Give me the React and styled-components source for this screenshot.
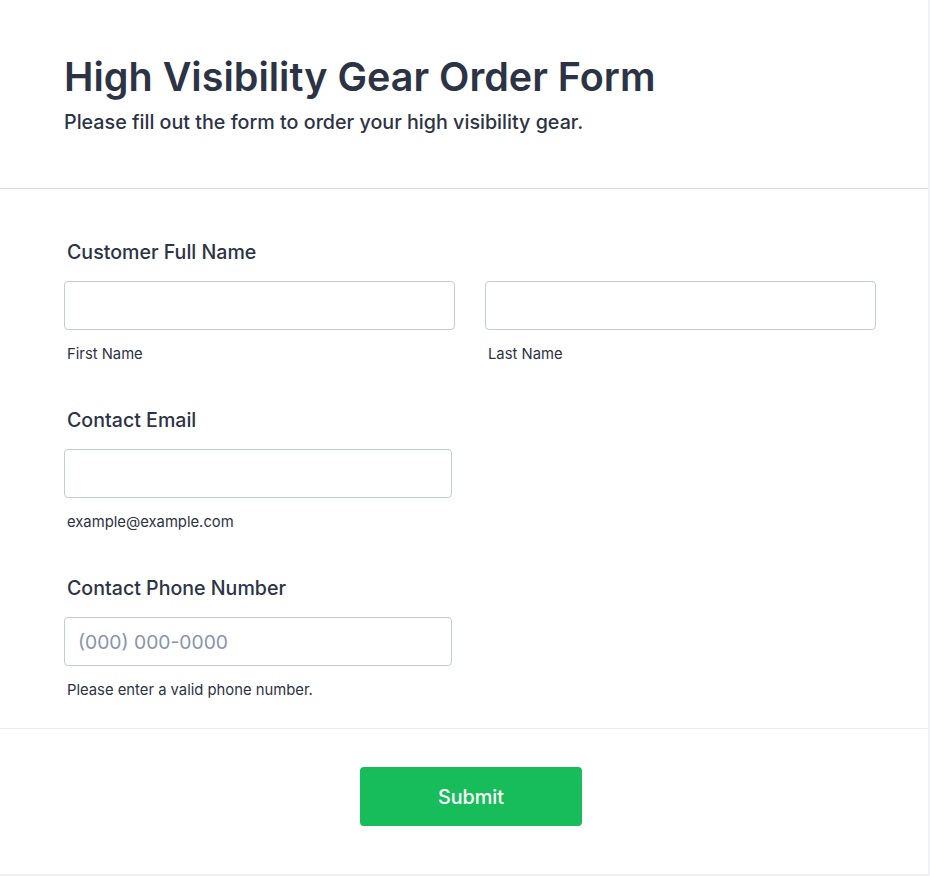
import React from 'react';
import styled, { createGlobalStyle } from 'styled-components';

const GlobalStyle = createGlobalStyle`
  * {
    box-sizing: border-box;
  }
  body {
    margin: 0;
    background: #f3f3fe;
    font-family: Inter, "Noto Sans", sans-serif;
    color: #2c3345;
  }
`;

function App() {
  return (
    <>
      <GlobalStyle />
      <Card>
        <Header>
          <Title>High Visibility Gear Order Form</Title>
          <Subtitle>Please fill out the form to order your high visibility gear.</Subtitle>
        </Header>
        <Body>
          <Field>
            <Label>Customer Full Name</Label>
            <NameRow>
              <Column>
                <Input type="text" />
                <SubLabel>First Name</SubLabel>
              </Column>
              <Column>
                <Input type="text" />
                <SubLabel>Last Name</SubLabel>
              </Column>
            </NameRow>
          </Field>
          <Field>
            <Label>Contact Email</Label>
            <Input type="email" $narrow />
            <SubLabel>example@example.com</SubLabel>
          </Field>
          <Field>
            <Label>Contact Phone Number</Label>
            <Input type="tel" placeholder="(000) 000-0000" $narrow />
            <SubLabel>Please enter a valid phone number.</SubLabel>
          </Field>
        </Body>
        <Footer>
          <SubmitButton type="button">Submit</SubmitButton>
        </Footer>
      </Card>
    </>
  );
}

const Card = styled.div`
  width: 929px;
  height: 875px;
  background: #fff;
  border-right: 1px solid #f0f0f4;
  border-bottom: 1px solid #f0f0f4;
`;

const Header = styled.div`
  padding: 53px 64px 0;
  height: 189px;
  border-bottom: 1px solid #d8d8e6;
`;

const Title = styled.h1`
  margin: 0;
  font-size: 39.5px;
  line-height: 48px;
  font-weight: 600;
  color: #2c3345;
`;

const Subtitle = styled.p`
  margin: 9px 0 0;
  font-size: 19.7px;
  line-height: 24px;
  font-weight: 500;
  color: #2c3345;
`;

const Body = styled.div`
  padding: 51px 54px 29px 64px;
  border-bottom: 1px solid #ececf2;
  display: flex;
  flex-direction: column;
  gap: 45px;
`;

const Field = styled.div`
  display: flex;
  flex-direction: column;
`;

const Label = styled.label`
  padding-left: 3px;
  margin-bottom: 17px;
  font-size: 19.6px;
  line-height: 24px;
  font-weight: 500;
  color: #2c3345;
`;

const NameRow = styled.div`
  display: grid;
  grid-template-columns: 391px 391px;
  column-gap: 30px;
`;

const Column = styled.div`
  display: flex;
  flex-direction: column;
`;

const Input = styled.input`
  width: ${p => (p.$narrow ? '388px' : '100%')};
  height: 49px;
  padding: 0 13px;
  border: 1px solid #c3cad8;
  border-radius: 4px;
  background: #fff;
  font-family: Inter, "Noto Sans", sans-serif;
  font-size: 19.3px;
  color: #2c3345;
  outline: none;

  &::placeholder {
    color: #8894ab;
  }
`;

const SubLabel = styled.span`
  margin-top: 15px;
  padding-left: 3px;
  font-size: 14.8px;
  line-height: 18px;
  color: #2c3345;
`;

const Footer = styled.div`
  display: flex;
  justify-content: center;
  padding-top: 38px;
  padding-left: 14px;
`;

const SubmitButton = styled.button`
  width: 222px;
  height: 59px;
  border: none;
  border-radius: 4px;
  background: #18bd5b;
  color: #fff;
  font-family: Inter, "Noto Sans", sans-serif;
  font-size: 19.8px;
  font-weight: 500;
  cursor: pointer;
`;

export default App;
